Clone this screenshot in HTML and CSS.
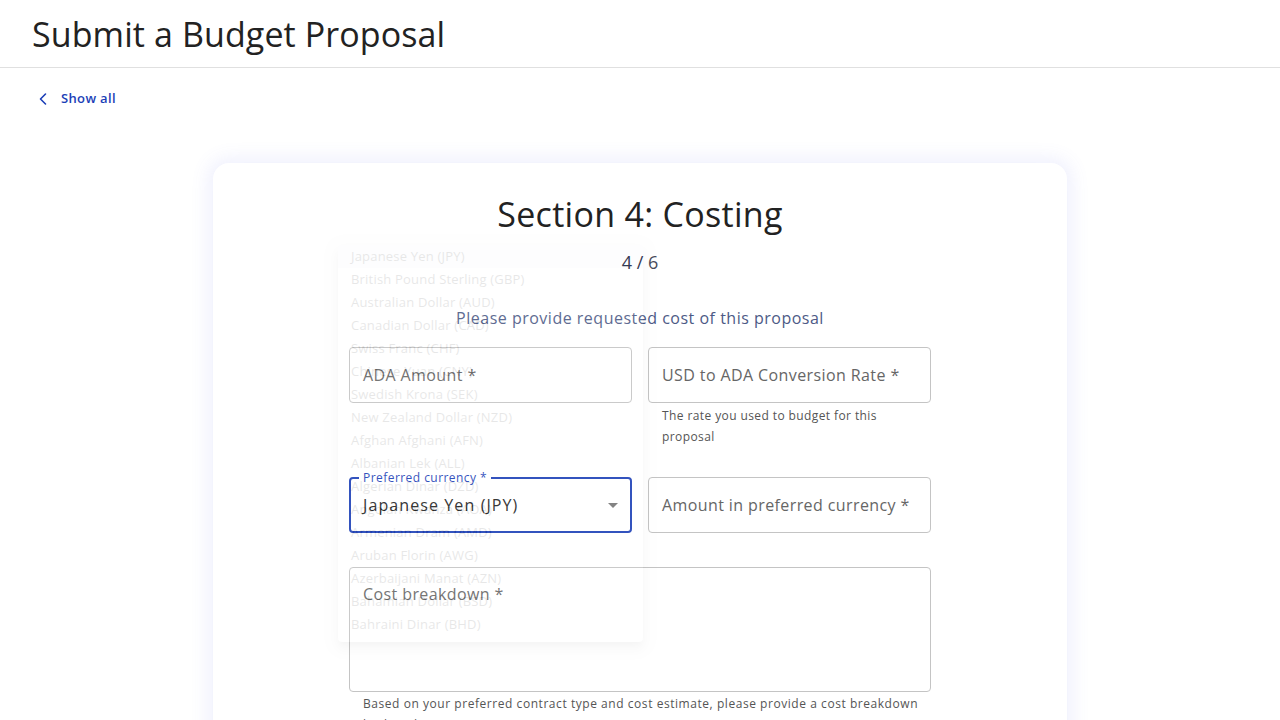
FILE: index.html
```html
<!DOCTYPE html>
<html lang="en">
<head>
<meta charset="utf-8">
<title>Submit a Budget Proposal</title>
<link rel="stylesheet" href="styles.css">
</head>
<body>
<header class="topbar">
  <h1 class="page-title">Submit a Budget Proposal</h1>
</header>
<nav class="backnav">
  <a class="back-link" href="#">
    <svg class="chev" width="16" height="16" viewBox="0 0 16 16" aria-hidden="true"><path d="M10.5 3 L5.5 8 L10.5 13" fill="none" stroke="#1c3fb7" stroke-width="1.6" stroke-linecap="round" stroke-linejoin="round"/></svg>
    <span>Show all</span>
  </a>
</nav>
<main class="main">
  <section class="card">
    <h2 class="section-title">Section 4: Costing</h2>
    <div class="progress"><span class="cur">4 /</span> <span class="tot">6</span></div>
    <p class="intro">Please provide requested cost of this proposal</p>

    <div class="grid">
      <div class="field">
        <div class="box"><span class="ph">ADA Amount *</span></div>
      </div>
      <div class="field">
        <div class="box"><span class="ph">USD to ADA Conversion Rate *</span></div>
        <p class="helper">The rate you used to budget for this proposal</p>
      </div>
      <div class="field">
        <div class="box box-focus">
          <span class="float-label">Preferred currency *</span>
          <span class="value">Japanese Yen (JPY)</span>
          <span class="arrow"></span>
        </div>
      </div>
      <div class="field">
        <div class="box"><span class="ph">Amount in preferred currency *</span></div>
      </div>
      <div class="field field-wide">
        <div class="box box-area"><span class="ph">Cost breakdown *</span></div>
        <div class="helper-row">
          <p class="helper helper-wide">Based on your preferred contract type and cost estimate, please provide a cost breakdown broken down in USD</p>
          <span class="counter">0/15000</span>
        </div>
      </div>
    </div>

    <ul class="menu">
      <li class="sel">Japanese Yen (JPY)</li>
      <li>British Pound Sterling (GBP)</li>
      <li>Australian Dollar (AUD)</li>
      <li>Canadian Dollar (CAD)</li>
      <li>Swiss Franc (CHF)</li>
      <li>Chinese Yuan (CNY)</li>
      <li>Swedish Krona (SEK)</li>
      <li>New Zealand Dollar (NZD)</li>
      <li>Afghan Afghani (AFN)</li>
      <li>Albanian Lek (ALL)</li>
      <li>Algerian Dinar (DZD)</li>
      <li>Angolan Kwanza (AOA)</li>
      <li>Armenian Dram (AMD)</li>
      <li>Aruban Florin (AWG)</li>
      <li>Azerbaijani Manat (AZN)</li>
      <li>Bahamian Dollar (BSD)</li>
      <li>Bahraini Dinar (BHD)</li>
      <li>Bangladeshi Taka (BDT)</li>
    </ul>
  </section>
</main>
</body>
</html>
```

FILE: styles.css
```css
* { box-sizing: border-box; }
html, body { margin: 0; padding: 0; }
body {
  font-family: "Open Sans", "DejaVu Sans", sans-serif;
  color: #212121;
  background: #ffffff;
  overflow: hidden;
  height: 720px;
}
.topbar {
  height: 68px;
  border-bottom: 1px solid #e0e0e0;
  display: flex;
  align-items: center;
  padding-left: 32px;
}
.page-title {
  margin: 0;
  font-size: 34px;
  font-weight: 400;
  color: #222;
  letter-spacing: 0.1px;
}
.backnav {
  padding: 21px 0 0 35px;
  height: 95px;
}
.back-link {
  display: inline-flex;
  align-items: center;
  gap: 10px;
  color: #1c3fb7;
  text-decoration: none;
  font-size: 13px;
  font-weight: 600;
  letter-spacing: 0.35px;
}
.chev { display: block; margin-top: 2px; }
.main {
  display: flex;
  justify-content: center;
}
.card {
  position: relative;
  width: 854px;
  height: 640px;
  background: #fff;
  border-radius: 16px;
  box-shadow: 0 0 18px 5px rgba(100, 110, 240, 0.1);
  padding: 24px 136px 0;
}
.section-title {
  margin: 0;
  text-align: center;
  font-size: 34px;
  font-weight: 400;
  line-height: 54px;
  color: #222;
  letter-spacing: 0.3px;
}
.progress {
  margin-top: 8px;
  text-align: center;
  font-size: 18px;
  line-height: 27px;
}
.progress .cur { color: #1e2640; }
.progress .tot { color: #4a4d5c; }
.intro {
  margin: 30px 0 0;
  text-align: center;
  font-size: 16px;
  line-height: 24px;
  color: #4d5a86;
  letter-spacing: 0.5px;
}
.grid {
  margin-top: 17px;
  display: grid;
  grid-template-columns: 1fr 1fr;
  column-gap: 16px;
  row-gap: 30px;
}
.field-wide { grid-column: 1 / 3; margin-top: 4px; }
.box {
  position: relative;
  height: 56px;
  border: 1px solid #c4c4c4;
  border-radius: 4px;
  display: flex;
  align-items: center;
  padding: 0 13px;
}
.ph {
  font-size: 16px;
  color: #666;
  letter-spacing: 0.4px;
}
.box-focus {
  border: 2px solid #1c3fb7;
  padding: 0 12px;
}
.float-label {
  position: absolute;
  top: -9px;
  left: 8px;
  padding: 0 4px;
  background: #fff;
  font-size: 12px;
  line-height: 16px;
  color: #1c3fb7;
  letter-spacing: 0.45px;
}
.value {
  font-size: 16px;
  color: #222;
  letter-spacing: 1.1px;
}
.arrow {
  position: absolute;
  right: 12px;
  top: 24px;
  width: 0;
  height: 0;
  border-left: 5px solid transparent;
  border-right: 5px solid transparent;
  border-top: 5px solid #757575;
}
.box-area {
  height: 125px;
  align-items: flex-start;
  padding-top: 15px;
}
.helper {
  margin: 2px 0 0;
  padding: 0 14px;
  font-size: 12px;
  line-height: 21px;
  color: #555;
  letter-spacing: 0.4px;
}
.helper-row {
  position: relative;
  display: flex;
}
.helper-wide {
  margin-top: 1px;
  padding-right: 0;
  letter-spacing: 0.55px;
}
.counter {
  position: absolute;
  right: 0;
  top: 22px;
  font-size: 12px;
  line-height: 21px;
  color: #555;
  letter-spacing: 0.4px;
}
.menu {
  position: absolute;
  left: 125px;
  top: 82px;
  width: 305px;
  height: 397px;
  margin: 0;
  padding: 0;
  list-style: none;
  background: #fff;
  border-radius: 4px;
  box-shadow: 0 5px 5px -3px rgba(0,0,0,0.2), 0 8px 10px 1px rgba(0,0,0,0.14), 0 3px 14px 2px rgba(0,0,0,0.12);
  opacity: 0.1;
  overflow: hidden;
}
.menu li {
  height: 23px;
  line-height: 23px;
  padding-left: 13px;
  font-size: 13px;
  color: #222;
  white-space: nowrap;
  letter-spacing: 0.2px;
}
.menu li.sel { background: rgba(28, 63, 183, 0.08); }
```
